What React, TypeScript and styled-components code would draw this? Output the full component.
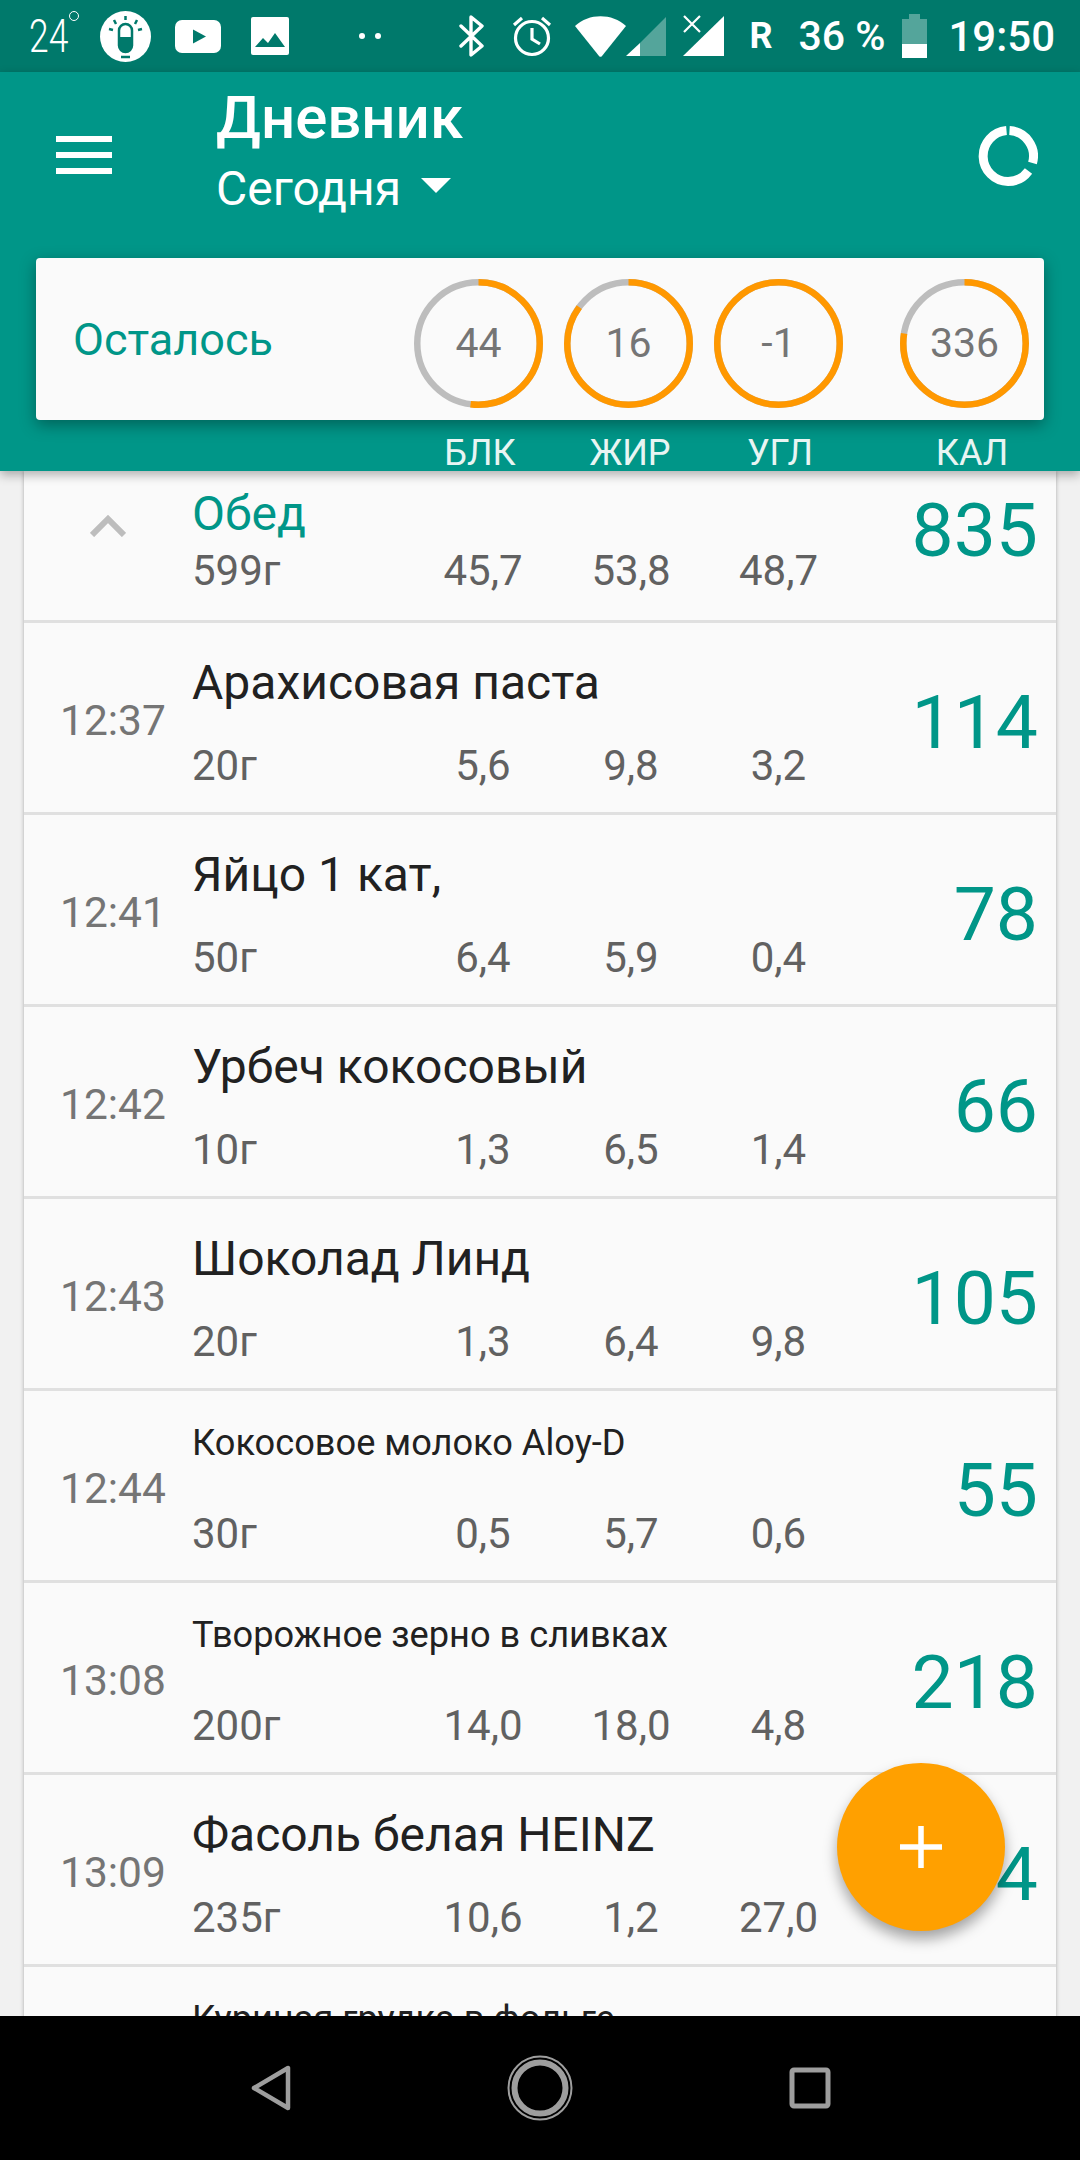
import React from "react";
import styled, { createGlobalStyle } from "styled-components";

const meals = [
  { time: "12:37", name: "Арахисовая паста", weight: "20г", p: "5,6", f: "9,8", c: "3,2", kcal: "114" },
  { time: "12:41", name: "Яйцо 1 кат,", weight: "50г", p: "6,4", f: "5,9", c: "0,4", kcal: "78" },
  { time: "12:42", name: "Урбеч кокосовый", weight: "10г", p: "1,3", f: "6,5", c: "1,4", kcal: "66" },
  { time: "12:43", name: "Шоколад Линд", weight: "20г", p: "1,3", f: "6,4", c: "9,8", kcal: "105" },
  { time: "12:44", name: "Кокосовое молоко Aloy-D", small: true, weight: "30г", p: "0,5", f: "5,7", c: "0,6", kcal: "55" },
  { time: "13:08", name: "Творожное зерно в сливках", small: true, weight: "200г", p: "14,0", f: "18,0", c: "4,8", kcal: "218" },
  { time: "13:09", name: "Фасоль белая HEINZ", weight: "235г", p: "10,6", f: "1,2", c: "27,0", kcal: "164" },
  { time: "13:12", name: "Куриная грудка в фольге", small: true, weight: "150г", p: "30,0", f: "3,0", c: "0,5", kcal: "150" },
];

const Ring = ({ value, part }: { value: string; part: number }) => {
  const r = 61.25;
  const len = 2 * Math.PI * r;
  return (
    <RingBox>
      <svg width="129" height="129" viewBox="0 0 129 129">
        <circle cx="64.5" cy="64.5" r={r} fill="none" stroke="#bdbdbd" strokeWidth="6.5" />
        <circle
          cx="64.5"
          cy="64.5"
          r={r}
          fill="none"
          stroke="#ff9800"
          strokeWidth="6.5"
          strokeDasharray={`${len * part} ${len}`}
          transform="rotate(-90 64.5 64.5)"
        />
      </svg>
      <RingValue>{value}</RingValue>
    </RingBox>
  );
};

const StatusBar = () => (
  <Status>
    <StatusLeft>
      <Temp>
        <TempDigits>24</TempDigits>
        <Degree />
      </Temp>
      <svg width="51" height="51" viewBox="0 0 51 51">
        <circle cx="25.5" cy="25.5" r="25.5" fill="#fff" />
        <rect x="19" y="13" width="13" height="28" rx="6.5" fill="none" stroke="#00796b" strokeWidth="2.5" />
        <path d="M19 26h13v9a6.5 6.5 0 0 1-13 0z" fill="#00796b" />
        <path d="M25.5 5v4M14 9l2 4M37 9l-2 4M9 18l4 1M42 18l-4 1M21 46h9" stroke="#00796b" strokeWidth="2.5" />
      </svg>
      <svg width="46" height="33" viewBox="0 0 46 33">
        <rect width="46" height="33" rx="7" fill="#fff" />
        <path d="M18 9.5 31 16.5 18 23.5z" fill="#00796b" />
      </svg>
      <PictureIcon width="38" height="38" viewBox="0 0 38 38">
        <rect width="38" height="38" rx="2" fill="#fff" />
        <path d="M4 30 12 21 17 26 24 16 34 30z" fill="#00796b" />
      </PictureIcon>
      <Dots>
        <Dot />
        <Dot />
      </Dots>
    </StatusLeft>
    <StatusRight>
      <svg width="26" height="42" viewBox="0 0 26 42">
        <path d="M2 11 23 31 12 40V2L23 11 2 31" fill="none" stroke="#fff" strokeWidth="3.4" strokeLinejoin="round" strokeLinecap="round" />
      </svg>
      <AlarmIcon width="42" height="42" viewBox="0 0 42 42">
        <circle cx="21" cy="23" r="16.5" fill="none" stroke="#fff" strokeWidth="3.2" />
        <path d="M21 13v11l8 5M3 10l8-7M39 10l-8-7" fill="none" stroke="#fff" strokeWidth="3.2" />
      </AlarmIcon>
      <WifiIcon width="51" height="41" viewBox="0 0 51 41">
        <path d="M0 10C14-3 37-3 51 10L27 40a2 2 0 0 1-3 0z" fill="#fff" />
      </WifiIcon>
      <svg width="40" height="40" viewBox="0 0 40 40">
        <path d="M40 1V40H14V27z" fill="#fff" fillOpacity=".33" />
        <path d="M14 27V40H0z" fill="#fff" />
      </svg>
      <SimIcon width="41" height="42" viewBox="0 0 41 42">
        <path d="M41 1V41H0z" fill="#fff" />
        <path d="M1 1 17 17M17 1 1 17" stroke="#fff" strokeWidth="2.2" />
      </SimIcon>
      <RoamLabel>R</RoamLabel>
      <Percent>36 %</Percent>
      <svg width="25" height="44" viewBox="0 0 25 44">
        <path d="M7 0h11v5h7v26H0V5h7z" fill="#fff" fillOpacity=".33" />
        <path d="M0 30h25v14H0z" fill="#fff" />
      </svg>
      <Clock>19:50</Clock>
    </StatusRight>
  </Status>
);

const App = () => (
  <>
    <GlobalStyle />
    <Screen>
      <StatusBar />
      <Header>
        <Toolbar>
          <MenuIcon>
            <MenuBar />
            <MenuBar />
            <MenuBar />
          </MenuIcon>
          <Titles>
            <Title>Дневник</Title>
            <DateLine>
              Сегодня
              <Caret />
            </DateLine>
          </Titles>
          <svg width="60" height="60" viewBox="0 0 60 60">
            <path d="M28.5 4.6A25.5 25.5 0 0 0 30 55.5 25.5 25.5 0 0 0 50.5 45" fill="none" stroke="#fff" strokeWidth="9" />
            <path d="M31.5 4.6A25.5 25.5 0 0 1 54.5 37" fill="none" stroke="#fff" strokeWidth="9" />
          </svg>
        </Toolbar>
        <Summary>
          <SummaryLabel>Осталось</SummaryLabel>
          <Ring value="44" part={0.52} />
          <Ring value="16" part={0.85} />
          <Ring value="-1" part={1} />
          <CalRing>
            <Ring value="336" part={0.775} />
          </CalRing>
        </Summary>
        <Legend>
          <LegendItem>БЛК</LegendItem>
          <LegendItem>ЖИР</LegendItem>
          <LegendItem>УГЛ</LegendItem>
          <LegendItem $shift={42}>КАЛ</LegendItem>
        </Legend>
      </Header>
      <List>
        <Sheet>
          <GroupRow>
            <Chevron width="36" height="22" viewBox="0 0 36 22">
              <path d="M2 20 18 4 34 20" fill="none" stroke="#bdbdbd" strokeWidth="6" />
            </Chevron>
            <GroupName>Обед</GroupName>
            <Value $align="left">599г</Value>
            <Value>45,7</Value>
            <Value>53,8</Value>
            <Value>48,7</Value>
            <GroupKcal>835</GroupKcal>
          </GroupRow>
          {meals.map((m) => (
            <Row key={m.time}>
              <Time>{m.time}</Time>
              <Name $small={m.small}>{m.name}</Name>
              <Value $align="left">{m.weight}</Value>
              <Value>{m.p}</Value>
              <Value>{m.f}</Value>
              <Value>{m.c}</Value>
              <Kcal>{m.kcal}</Kcal>
            </Row>
          ))}
        </Sheet>
        <Fab>
          <svg width="44" height="44" viewBox="0 0 44 44">
            <path d="M22 1v42M1 22h42" stroke="#fff" strokeWidth="5.5" />
          </svg>
        </Fab>
      </List>
      <NavBar>
        <BackIcon width="40" height="46" viewBox="0 0 40 46">
          <path d="M37 3V43L3 23z" fill="none" stroke="#9e9e9e" strokeWidth="4.5" strokeLinejoin="round" />
        </BackIcon>
        <svg width="66" height="66" viewBox="0 0 66 66">
          <circle cx="33" cy="33" r="31.5" fill="none" stroke="#9e9e9e" strokeWidth="2" />
          <circle cx="33" cy="33" r="25.5" fill="none" stroke="#9e9e9e" strokeWidth="6" />
        </svg>
        <svg width="42" height="42" viewBox="0 0 42 42">
          <rect x="3" y="3" width="36" height="36" rx="2" fill="none" stroke="#9e9e9e" strokeWidth="5" />
        </svg>
      </NavBar>
    </Screen>
  </>
);

export default App;

const GlobalStyle = createGlobalStyle`
  html, body {
    margin: 0;
    padding: 0;
    background: #f1f1f1;
  }
  * {
    box-sizing: border-box;
  }
`;

const Screen = styled.div`
  width: 1080px;
  height: 2160px;
  display: flex;
  flex-direction: column;
  overflow: hidden;
  font-family: Roboto, "Noto Sans", sans-serif;
  background: #f1f1f1;
`;

const Status = styled.div`
  height: 72px;
  flex: none;
  display: flex;
  justify-content: space-between;
  align-items: center;
  padding: 0 25px 0 29px;
  background: #00796b;
  color: #fff;
`;

const StatusLeft = styled.div`
  display: flex;
  align-items: center;
  gap: 24px;
`;

const StatusRight = styled.div`
  display: flex;
  align-items: center;
`;

const Temp = styled.div`
  width: 47px;
  height: 50px;
  display: flex;
  align-items: flex-start;
`;

const TempDigits = styled.span`
  font-size: 46px;
  line-height: 50px;
  font-weight: 300;
  transform: scaleX(0.77);
  transform-origin: left center;
  width: 40px;
`;

const Degree = styled.span`
  width: 10px;
  height: 10px;
  flex: none;
  border: 1.5px solid #fff;
  border-radius: 50%;
`;

const PictureIcon = styled.svg`
  margin-left: 6px;
`;

const Dots = styled.div`
  display: flex;
  gap: 10px;
  margin-left: 46px;
`;

const Dot = styled.span`
  width: 6px;
  height: 6px;
  border-radius: 50%;
  background: #fff;
`;

const AlarmIcon = styled.svg`
  margin-left: 26px;
`;

const WifiIcon = styled.svg`
  margin-left: 22px;
`;

const SimIcon = styled.svg`
  margin-left: 17px;
`;

const RoamLabel = styled.span`
  margin-left: 25px;
  font-size: 36px;
  font-weight: 700;
`;

const Percent = styled.span`
  margin-left: 26px;
  margin-right: 17px;
  font-size: 41px;
  font-weight: 500;
`;

const Clock = styled.span`
  margin-left: 21px;
  font-size: 42px;
  font-weight: 500;
`;

const Header = styled.header`
  height: 399px;
  flex: none;
  position: relative;
  z-index: 2;
  background: #009688;
  box-shadow: 0 4px 10px rgba(0, 0, 0, 0.3);
`;

const Toolbar = styled.div`
  height: 186px;
  display: flex;
  align-items: flex-start;
  padding: 54px 42px 0 56px;
  & > svg {
    margin-left: auto;
  }
`;

const MenuIcon = styled.div`
  width: 56px;
  margin-top: 10px;
  display: flex;
  flex-direction: column;
  gap: 10px;
`;

const MenuBar = styled.span`
  height: 6px;
  background: #fff;
`;

const Titles = styled.div`
  margin: -46px 0 0 104px;
  color: #fff;
`;

const Title = styled.div`
  font-size: 60px;
  line-height: 76px;
  font-weight: 500;
`;

const DateLine = styled.div`
  display: flex;
  align-items: center;
  font-size: 48px;
  line-height: 66px;
`;

const Caret = styled.span`
  width: 0;
  height: 0;
  margin: -8px 0 0 20px;
  border-left: 15px solid transparent;
  border-right: 15px solid transparent;
  border-top: 15px solid #fff;
`;

const Summary = styled.div`
  height: 162px;
  margin: 0 36px;
  display: flex;
  align-items: center;
  gap: 21px;
  padding: 8px 15px 0 37px;
  border-radius: 4px;
  background: #fafafa;
  box-shadow: 0 5px 16px rgba(0, 0, 0, 0.35);
`;

const SummaryLabel = styled.div`
  flex: 1;
  margin-top: -8px;
  color: #009688;
  font-size: 45px;
`;

const RingBox = styled.div`
  width: 129px;
  height: 129px;
  display: grid;
  place-items: center;
  & > * {
    grid-area: 1 / 1;
  }
`;

const RingValue = styled.span`
  color: #757575;
  font-size: 41px;
`;

const CalRing = styled.div`
  margin-left: 36px;
`;

const Legend = styled.div`
  height: 51px;
  display: flex;
  align-items: center;
  padding: 14px 0 0 405px;
`;

const LegendItem = styled.span<{ $shift?: number }>`
  width: 150px;
  margin-left: ${({ $shift }) => $shift ?? 0}px;
  text-align: center;
  color: #e8f5f3;
  font-size: 36px;
`;

const List = styled.div`
  flex: 1;
  min-height: 0;
  position: relative;
  overflow: hidden;
`;

const Sheet = styled.div`
  margin: 0 24px;
  background: #fafafa;
  box-shadow: 0 0 4px rgba(0, 0, 0, 0.3);
`;

const Row = styled.div`
  height: 192px;
  display: grid;
  grid-template-columns: 168px 217px 148px 148px 147px 1fr;
  grid-template-rows: 119px 73px;
  border-bottom: 3px solid #e0e0e0;
`;

const GroupRow = styled(Row)`
  height: 152px;
  grid-template-rows: 76px 76px;
`;

const Chevron = styled.svg`
  grid-column: 1;
  grid-row: 1 / span 2;
  margin: 44px 0 0 66px;
`;

const Time = styled.div`
  grid-row: 1 / span 2;
  align-self: center;
  padding: 2px 0 0 36px;
  color: #757575;
  font-size: 42.5px;
`;

const Name = styled.div<{ $small?: boolean }>`
  grid-column: 2 / span 4;
  align-self: center;
  padding-bottom: ${({ $small }) => ($small ? 16 : 0)}px;
  color: #212121;
  font-size: ${({ $small }) => ($small ? 36.2 : 48)}px;
  white-space: nowrap;
`;

const GroupName = styled.div`
  grid-column: 2 / span 4;
  align-self: end;
  padding-bottom: 3px;
  color: #009688;
  font-size: 48px;
  line-height: 60px;
`;

const Value = styled.div<{ $align?: string }>`
  grid-row: 2;
  text-align: ${({ $align }) => $align ?? "center"};
  color: #616161;
  font-size: 42px;
  line-height: 48px;
`;

const Kcal = styled.div`
  grid-column: 6;
  grid-row: 1 / span 2;
  align-self: center;
  justify-self: end;
  padding: 6px 18px 0 0;
  color: #009688;
  font-size: 75px;
`;

const GroupKcal = styled(Kcal)`
  align-self: start;
  padding-top: 15px;
`;

const Fab = styled.div`
  position: absolute;
  left: 837px;
  top: 1292px;
  width: 168px;
  height: 168px;
  display: flex;
  align-items: center;
  justify-content: center;
  border-radius: 50%;
  background: #ffa000;
  box-shadow: 0 8px 14px rgba(0, 0, 0, 0.35);
`;

const NavBar = styled.nav`
  height: 144px;
  flex: none;
  position: relative;
  z-index: 2;
  display: flex;
  align-items: center;
  justify-content: center;
  gap: 216px;
  background: #000;
`;

const BackIcon = styled.svg`
  margin-left: 2px;
`;
